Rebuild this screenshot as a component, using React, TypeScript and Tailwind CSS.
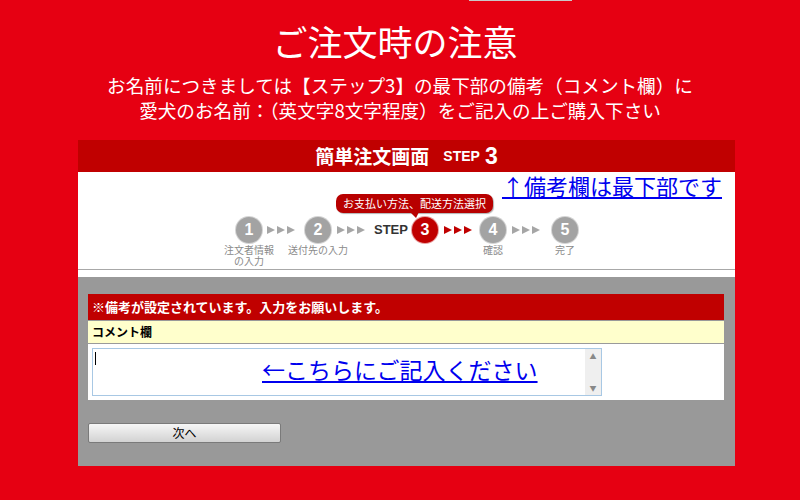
const jp = { fontFamily: '"Noto Sans CJK JP", "Noto Sans", sans-serif' };

function Arrows({ red }: { red?: boolean }) {
  const c = red ? '#c00000' : '#a6a6a6';
  return (
    <svg width="30" height="10" viewBox="0 0 30 10" className="shrink-0">
      <polygon points="1,1 9,5 1,9" fill={c} />
      <polygon points="11,1 19,5 11,9" fill={c} />
      <polygon points="21,1 29,5 21,9" fill={c} />
    </svg>
  );
}

function Step({ n, label, active }: { n: number; label?: string; active?: boolean }) {
  return (
    <div className="relative flex w-[26px] shrink-0 flex-col items-center">
      <div
        className={`flex h-[26px] w-[26px] items-center justify-center rounded-full text-[16px] font-bold text-white ${
          active ? 'bg-[#c00000] ring-1 ring-[#e8a0a0]' : 'bg-[#a3a3a3] ring-1 ring-[#d4d4d4]'
        }`}
        style={{ fontFamily: '"Liberation Sans", Arial, sans-serif' }}
      >
        {n}
      </div>
      {label && (
        <div className="mt-[1px] whitespace-pre text-center text-[10px] leading-[11px] text-[#8a8a8a]">{label}</div>
      )}
      {active && (
        <div className="absolute left-[-76px] top-[-23px] w-[157px]">
          <div className="flex h-[19px] items-center justify-center rounded-[7px] bg-[#b80000] text-[11px] text-white shadow-[1px_1px_1px_rgba(0,0,0,0.3)]">
            お支払い方法、配送方法選択
          </div>
          <svg width="10" height="6" viewBox="0 0 10 6" className="absolute left-[74px] top-[18px]">
            <polygon points="0,0 9,0 6,6" fill="#b80000" />
          </svg>
        </div>
      )}
    </div>
  );
}

export default function App() {
  return (
    <div className="relative h-[500px] w-[800px] overflow-hidden bg-[#e60012] text-white" style={jp}>
      <div className="absolute left-[469px] top-0 h-[1px] w-[103px] bg-[#c8c8c8]" />

      <h1 className="pr-[10px] pt-[18px] text-center text-[35px] font-normal leading-[46px]">ご注文時の注意</h1>
      <p className="mt-[8px] text-center text-[18.6px] leading-[25px]">
        お名前につきましては【ステップ3】の最下部の備考（コメント欄）に
        <br />
        愛犬のお名前：（英文字8文字程度）をご記入の上ご購入下さい
      </p>

      <div className="ml-[78px] mt-[18px] w-[657px]">
        <div className="flex h-[32px] items-center justify-center bg-[#c00000] font-bold">
          <span className="text-[19px]">簡単注文画面</span>
          <span className="ml-[14px] text-[14px]" style={{ fontFamily: '"Liberation Sans", Arial, sans-serif' }}>
            STEP
          </span>
          <span className="ml-[5px] text-[23px]" style={{ fontFamily: '"Liberation Sans", Arial, sans-serif' }}>
            3
          </span>
        </div>

        <div className="h-[97px] bg-white">
          <div className="flex h-[27px] items-end justify-end pr-[13px]">
            <a className="text-[22px] leading-[27px] text-[#0000ee] underline">↑備考欄は最下部です</a>
          </div>
          <div className="mt-[18px] flex items-start pl-[158px]">
            <Step n={1} label={'注文者情報\nの入力'} />
            <div className="ml-[4px] mr-[9px] mt-[8px]">
              <Arrows />
            </div>
            <Step n={2} label="送付先の入力" />
            <div className="ml-[5px] mr-[8px] mt-[8px]">
              <Arrows />
            </div>
            <span
              className="mr-[4px] mt-[5px] text-[13px] font-bold leading-[16px] text-[#333]"
              style={{ fontFamily: '"Liberation Sans", Arial, sans-serif' }}
            >
              STEP
            </span>
            <Step n={3} active />
            <div className="ml-[5px] mr-[7px] mt-[8px]">
              <Arrows red />
            </div>
            <Step n={4} label="確認" />
            <div className="ml-[5px] mr-[11px] mt-[8px]">
              <Arrows />
            </div>
            <Step n={5} label="完了" />
          </div>
        </div>
        <div className="h-[1px] bg-[#a8a8a8]" />
        <div className="h-[7px] bg-white" />

        <div className="h-[189px] bg-[#999999] pl-[10px] pr-[11px] pt-[17px]">
          <div className="flex h-[26px] items-center bg-[#c00000] pl-[4px] text-[13px] font-bold">
            ※備考が設定されています。入力をお願いします。
          </div>
          <div className="flex h-[24px] items-center border-y border-[#9a9a9a] bg-[#ffffcc] pl-[4px] text-[12px] font-bold text-black">
            コメント欄
          </div>
          <div className="h-[56px] bg-white pl-[4px] pt-[4px]">
            <div className="flex h-[48px] w-[510px] border border-[#a8c8e4]">
              <div className="relative flex-1">
                <div className="absolute left-[2px] top-[3px] h-[13px] w-[1px] bg-black" />
                <div className="pl-[169px] pt-[6px]">
                  <a className="text-[23px] leading-[28px] text-[#0000ee] underline">←こちらにご記入ください</a>
                </div>
              </div>
              <div className="flex w-[16px] flex-col items-center justify-between bg-[#efefef] py-[2px] text-[7px] leading-[10px] text-[#888]">
                <span>▲</span>
                <span>▼</span>
              </div>
            </div>
          </div>
          <button className="mt-[23px] flex h-[20px] w-[193px] items-center justify-center rounded-[2px] border border-[#7a7a7a] bg-gradient-to-b from-[#f6f6f6] via-[#e4e4e4] to-[#d2d2d2] text-[12px] text-black">
            次へ
          </button>
        </div>
      </div>
    </div>
  );
}
